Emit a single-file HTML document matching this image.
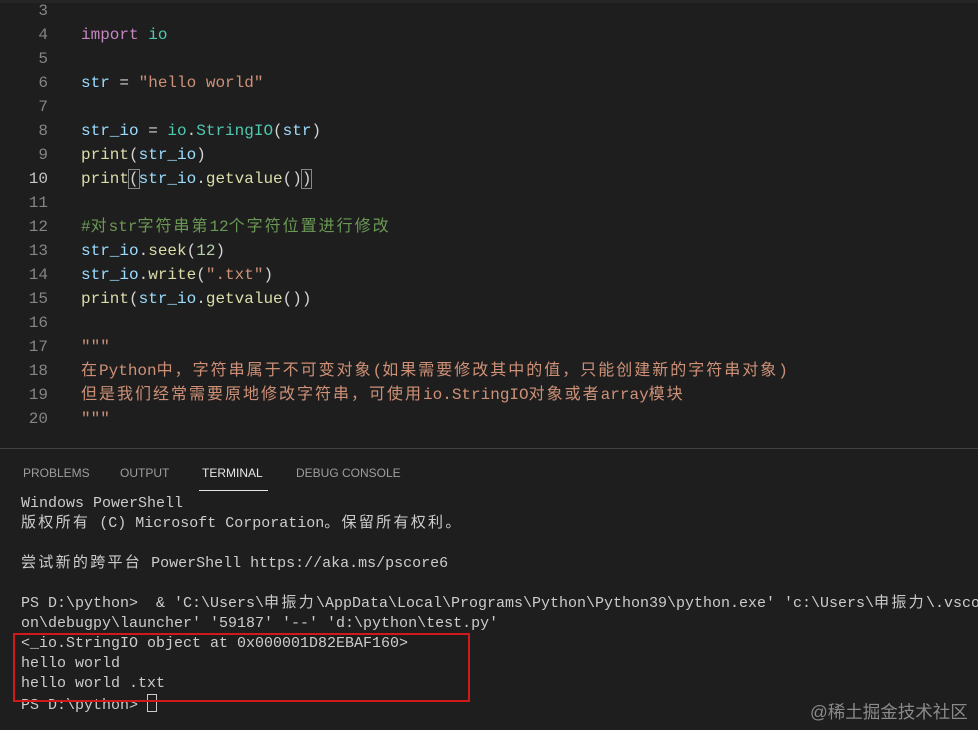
<!DOCTYPE html>
<html><head><meta charset="utf-8"><style>
body{margin:0;width:978px;height:729px;background:#1e1e1e;overflow:hidden;position:relative;font-family:"Liberation Mono","Noto Sans CJK SC",monospace}
.top{position:absolute;left:0;top:0;width:978px;height:3px;background:#252526}
.ln{position:absolute;left:0;width:48px;text-align:right;color:#858585;font-size:16px;line-height:24px}
.cd{position:absolute;left:81px;font-size:16px;line-height:24px;color:#d4d4d4;white-space:pre}
.k{color:#c586c0}.m{color:#4ec9b0}.v{color:#9cdcfe}.s{color:#ce9178}.f{color:#dcdcaa}.c{color:#6a9955}
.z{letter-spacing:2px}
.y{letter-spacing:2.3px}
.br{outline:1px solid #888;}
.panel{position:absolute;left:0;top:448px;width:978px;height:281px;border-top:1px solid #414141}
.tab{position:absolute;top:466px;font-family:"Liberation Sans",sans-serif;font-size:12px;color:#9d9d9d}
.t{position:absolute;left:21px;font-size:15px;line-height:20px;color:#cccccc;white-space:pre;font-family:"Liberation Mono","Noto Sans CJK SC",monospace}
</style></head><body>
<div class="top"></div>
<div class="ln" style="top:-1px">3</div>
<div class="ln" style="top:23px">4</div><div class="cd" style="top:23px"><span class="k">import</span> <span class="m">io</span></div>
<div class="ln" style="top:47px">5</div>
<div class="ln" style="top:71px">6</div><div class="cd" style="top:71px"><span class="v">str</span> = <span class="s">"hello world"</span></div>
<div class="ln" style="top:95px">7</div>
<div class="ln" style="top:119px">8</div><div class="cd" style="top:119px"><span class="v">str_io</span> = <span class="m">io</span>.<span class="m">StringIO</span>(<span class="v">str</span>)</div>
<div class="ln" style="top:143px">9</div><div class="cd" style="top:143px"><span class="f">print</span>(<span class="v">str_io</span>)</div>
<div class="ln" style="top:167px;color:#c6c6c6">10</div><div class="cd" style="top:167px"><span class="f">print</span><span class="br">(</span><span class="v">str_io</span>.<span class="f">getvalue</span>()<span class="br">)</span></div>
<div class="ln" style="top:191px">11</div>
<div class="ln" style="top:215px">12</div><div class="cd c" style="top:215px">#<span class="z">对</span>str<span class="z">字符串第</span>12<span class="z">个字符位置进行修改</span></div>
<div class="ln" style="top:239px">13</div><div class="cd" style="top:239px"><span class="v">str_io</span>.<span class="f">seek</span>(<span style="color:#b5cea8">12</span>)</div>
<div class="ln" style="top:263px">14</div><div class="cd" style="top:263px"><span class="v">str_io</span>.<span class="f">write</span>(<span class="s">".txt"</span>)</div>
<div class="ln" style="top:287px">15</div><div class="cd" style="top:287px"><span class="f">print</span>(<span class="v">str_io</span>.<span class="f">getvalue</span>())</div>
<div class="ln" style="top:311px">16</div>
<div class="ln" style="top:335px">17</div><div class="cd s" style="top:335px">"""</div>
<div class="ln" style="top:359px">18</div><div class="cd s" style="top:359px"><span class="z">在</span>Python<span class="z">中，字符串属于不可变对象</span>(<span class="z">如果需要修改其中的值，只能创建新的字符串对象</span>)</div>
<div class="ln" style="top:383px">19</div><div class="cd s" style="top:383px"><span class="z">但是我们经常需要原地修改字符串，可使用</span>io.StringIO<span class="z">对象或者</span>array<span class="z">模块</span></div>
<div class="ln" style="top:407px">20</div><div class="cd s" style="top:407px">"""</div>
<div class="panel"></div>
<div class="tab" style="left:23px">PROBLEMS</div>
<div class="tab" style="left:120px">OUTPUT</div>
<div class="tab" style="left:202px;color:#e7e7e7">TERMINAL</div>
<div style="position:absolute;left:199px;top:490px;width:69px;height:1px;background:#e7e7e7"></div>
<div class="tab" style="left:296px">DEBUG CONSOLE</div>
<div class="t" style="top:494px">Windows PowerShell</div>
<div class="t" style="top:514px"><span class="y">版权所有</span> (C) Microsoft Corporation<span class="y">。保留所有权利。</span></div>
<div class="t" style="top:554px"><span class="y">尝试新的跨平台</span> PowerShell https://aka.ms/pscore6</div>
<div class="t" style="top:594px">PS D:\python>  &amp; 'C:\Users\<span class="y">申振力</span>\AppData\Local\Programs\Python\Python39\python.exe' 'c:\Users\<span class="y">申振力</span>\.vscode</div>
<div class="t" style="top:614px">on\debugpy\launcher' '59187' '--' 'd:\python\test.py'</div>
<div class="t" style="top:634px">&lt;_io.StringIO object at 0x000001D82EBAF160&gt;</div>
<div class="t" style="top:654px">hello world</div>
<div class="t" style="top:674px">hello world .txt</div>
<div class="t" style="top:694px">PS D:\python> <span style="display:inline-block;width:8px;height:16px;border:1px solid #ccc;vertical-align:-3px"></span></div>
<div style="position:absolute;left:13px;top:633px;width:453px;height:65px;border:2px solid #d0191b"></div>
<div style="position:absolute;left:810px;top:699px;font-family:'Liberation Sans','Noto Sans CJK SC',sans-serif;font-size:17.5px;color:#8a8a8a">@稀土掘金技术社区</div>
</body></html>
